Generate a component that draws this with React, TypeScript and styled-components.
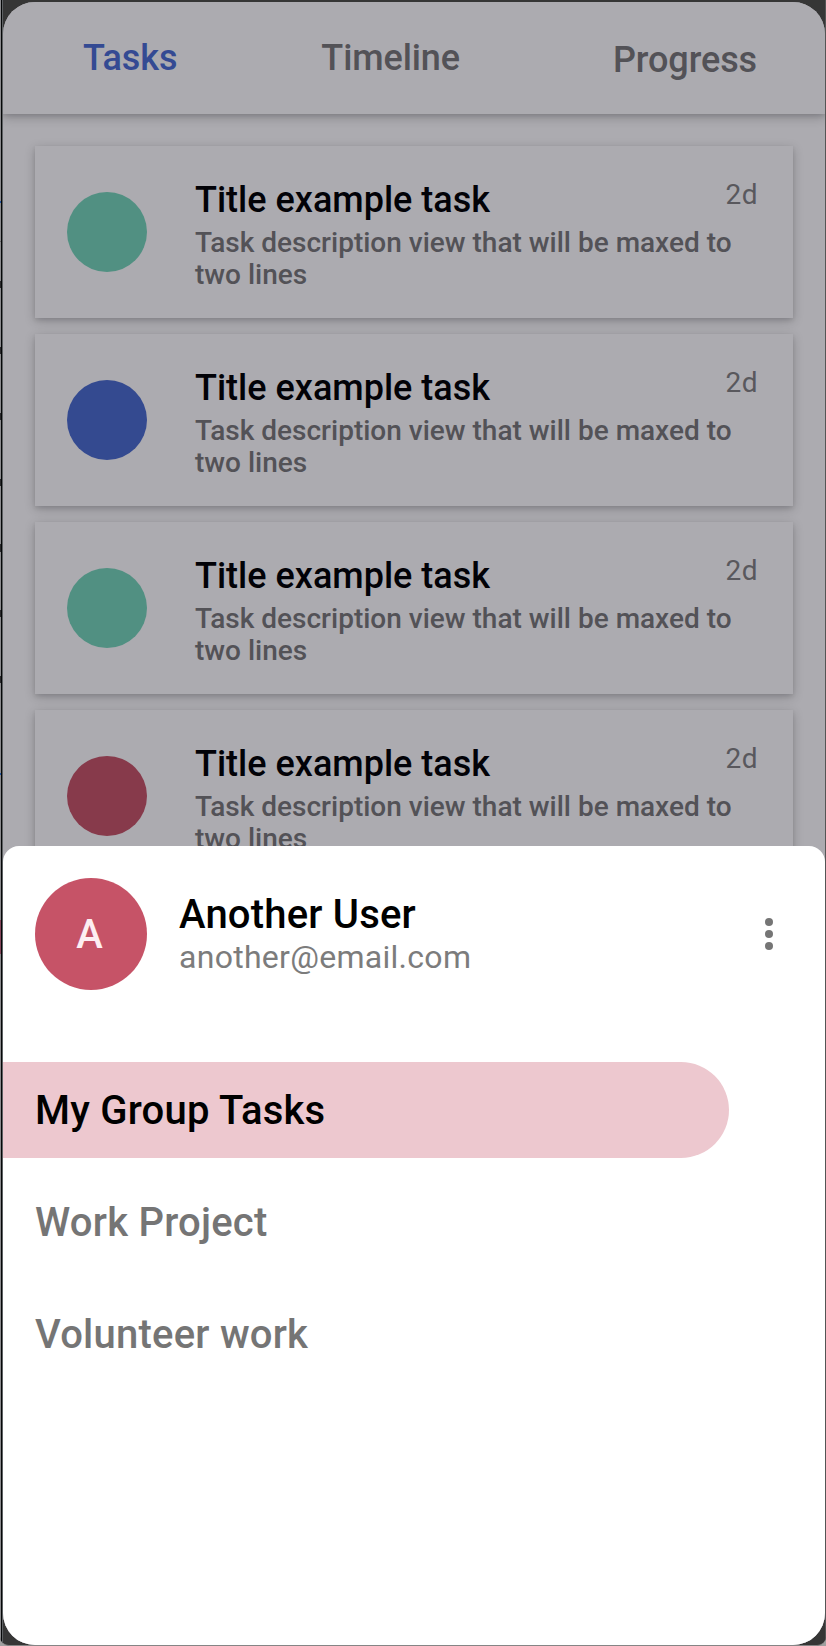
import React from "react";
import styled, { createGlobalStyle } from "styled-components";

const GlobalStyle = createGlobalStyle`
  *, *::before, *::after { box-sizing: border-box; }
  body { margin: 0; background: #a0a0a0; }
  h2, h3, p { margin: 0; font-weight: inherit; }
  button { font: inherit; letter-spacing: inherit; border: 0; padding: 0; background: none; text-align: left; }
`;

const Device = styled.div`
  width: 826px;
  height: 1646px;
  display: grid;
  grid-template-columns: 1px 1px 1px 822px 1px;
  border-bottom: 1px solid #858585;
  border-radius: 0 0 9px 9px;
  overflow: hidden;
  background: #363636;
  font-family: Roboto, sans-serif;
  font-weight: 500;
`;

const Backdrop = styled.div`
  background: #8b8b8e;
  padding-top: 201px;
`;

const Mark = styled.div<{ $color: string; $size: number; $gap: number }>`
  height: ${(p) => p.$size}px;
  margin-bottom: ${(p) => p.$gap}px;
  background: ${(p) => p.$color};
`;

const Rim = styled.div<{ $color: string }>`
  background: ${(p) => p.$color};
`;

const Screen = styled.main`
  margin-top: 2px;
  height: 1643px;
  display: flex;
  flex-direction: column;
  border-radius: 32px;
  overflow: hidden;
  background: #acabb0;
`;

const Tabs = styled.nav`
  flex: none;
  height: 112px;
  display: flex;
  justify-content: space-between;
  padding: 35px 68px 0 80px;
  font-size: 36px;
  line-height: 42px;
  background: #acabb0;
  box-shadow: 0 3px 10px rgba(0, 0, 10, 0.24), 0 2px 4px rgba(0, 0, 10, 0.08);
`;

const Tab = styled.button<{ $active?: boolean; $drop?: number; $nudge?: number }>`
  height: 42px;
  margin-top: ${(p) => p.$drop ?? 0}px;
  margin-right: ${(p) => p.$nudge ?? 0}px;
  letter-spacing: -0.1px;
  color: ${(p) => (p.$active ? "#344a93" : "#535257")};
`;

const TaskList = styled.section`
  flex: none;
  height: 732px;
  overflow: hidden;
  display: flex;
  flex-direction: column;
  gap: 16px;
  padding: 32px 32px 0;
`;

const Card = styled.article`
  flex: none;
  height: 172px;
  display: flex;
  padding: 33px 35px 0 32px;
  background: #acabb0;
  box-shadow: 0 3px 10px rgba(0, 0, 10, 0.22), 0 2px 4px rgba(0, 0, 10, 0.08);
`;

const Dot = styled.span<{ $color: string }>`
  flex: none;
  width: 80px;
  height: 80px;
  margin: 13px 48px 0 0;
  border-radius: 50%;
  background: ${(p) => p.$color};
`;

const TaskBody = styled.div`
  flex: 1;
`;

const TaskHead = styled.div`
  display: flex;
  justify-content: space-between;
`;

const TaskTitle = styled.h3`
  font-size: 36px;
  line-height: 42px;
  color: #020207;
`;

const Age = styled.span`
  font-size: 28px;
  line-height: 32px;
  font-weight: 400;
  letter-spacing: 0.5px;
  color: #59585d;
`;

const TaskText = styled.p`
  width: 545px;
  margin-top: 6px;
  font-size: 28px;
  line-height: 32px;
  color: #535257;
`;

const SheetArea = styled.div`
  flex: 1;
  background: #acabb0;
`;

const Sheet = styled.section`
  height: 100%;
  border-radius: 16px 16px 0 0;
  background: #fff;
`;

const Account = styled.header`
  display: flex;
  padding: 32px 44px 0 32px;
`;

const Avatar = styled.div`
  width: 112px;
  height: 112px;
  margin-right: 32px;
  padding-right: 3px;
  border-radius: 50%;
  display: grid;
  place-items: center;
  font-size: 40px;
  color: #fdeef2;
  background: #c65367;
`;

const Identity = styled.div`
  flex: 1;
  padding-top: 13px;
`;

const Name = styled.h2`
  font-size: 40px;
  line-height: 47px;
  letter-spacing: 0.2px;
  color: #000;
`;

const Email = styled.p`
  font-size: 32px;
  line-height: 38px;
  font-weight: 400;
  letter-spacing: 0.28px;
  color: #7c7c7c;
`;

const More = styled.button`
  width: 24px;
  height: 112px;
  display: grid;
  place-items: center;
`;

const GroupList = styled.nav`
  display: flex;
  flex-direction: column;
  gap: 16px;
  margin-top: 72px;
`;

const Group = styled.button<{ $active?: boolean }>`
  width: 726px;
  height: 96px;
  padding-left: 32px;
  border-radius: 0 48px 48px 0;
  font-size: 40px;
  letter-spacing: 0.23px;
  color: ${(p) => (p.$active ? "#000" : "#757575")};
  background: ${(p) => (p.$active ? "#edc8cf" : "transparent")};
`;

const taskColors = ["#519082", "#344a90", "#519082", "#873a4b"];
const marks: [string, number, number][] = [
  ["#2455a0", 2, 38], ["#666", 1, 39], ["#2a2a2c", 7, 59], ["#2a2a2c", 7, 59],
  ["#2a2a2c", 7, 59], ["#2a2a2c", 7, 58], ["#2a2a2c", 8, 58], ["#2a2a2c", 7, 59],
  ["#2a2a2c", 7, 90], ["#2455a0", 2, 145], ["#84465a", 34, 0],
];

export default function App() {
  return (
    <>
      <GlobalStyle />
      <Device>
        <Backdrop>
          {marks.map(([color, size, gap], i) => (
            <Mark key={i} $color={color} $size={size} $gap={gap} />
          ))}
        </Backdrop>
        <Rim $color="#050708" />
        <Rim $color="#5d6063" />
        <Screen>
          <Tabs>
            <Tab $active>Tasks</Tab>
            <Tab $nudge={9}>Timeline</Tab>
            <Tab $drop={2}>Progress</Tab>
          </Tabs>
          <TaskList>
            {taskColors.map((color, i) => (
              <Card key={i}>
                <Dot $color={color} />
                <TaskBody>
                  <TaskHead>
                    <TaskTitle>Title example task</TaskTitle>
                    <Age>2d</Age>
                  </TaskHead>
                  <TaskText>Task description view that will be maxed to two lines</TaskText>
                </TaskBody>
              </Card>
            ))}
          </TaskList>
          <SheetArea>
            <Sheet>
              <Account>
                <Avatar>A</Avatar>
                <Identity>
                  <Name>Another User</Name>
                  <Email>another@email.com</Email>
                </Identity>
                <More aria-label="More options">
                  <svg width="8" height="32" viewBox="0 0 8 32" fill="#757575">
                    <circle cx="4" cy="4" r="4" />
                    <circle cx="4" cy="16" r="4" />
                    <circle cx="4" cy="28" r="4" />
                  </svg>
                </More>
              </Account>
              <GroupList>
                <Group $active>My Group Tasks</Group>
                <Group>Work Project</Group>
                <Group>Volunteer work</Group>
              </GroupList>
            </Sheet>
          </SheetArea>
        </Screen>
        <Rim $color="#555" />
      </Device>
    </>
  );
}
